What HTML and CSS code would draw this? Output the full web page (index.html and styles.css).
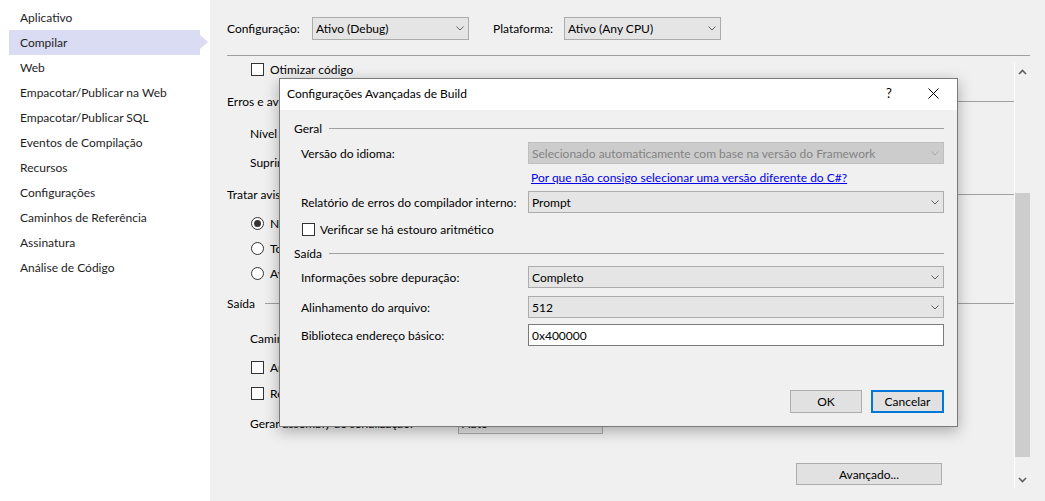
FILE: index.html
```html
<!DOCTYPE html>
<html lang="pt-BR">
<head>
<meta charset="utf-8">
<title>Compilar</title>
<link rel="stylesheet" href="styles.css">
</head>
<body>
<div class="app">
  <nav class="sidebar">
    <div class="nav-item">Aplicativo</div>
    <div class="nav-item is-active">Compilar</div>
    <div class="nav-item">Web</div>
    <div class="nav-item">Empacotar/Publicar na Web</div>
    <div class="nav-item">Empacotar/Publicar SQL</div>
    <div class="nav-item">Eventos de Compilação</div>
    <div class="nav-item">Recursos</div>
    <div class="nav-item">Configurações</div>
    <div class="nav-item">Caminhos de Referência</div>
    <div class="nav-item">Assinatura</div>
    <div class="nav-item">Análise de Código</div>
  </nav>
  <main class="page">
    <div class="config-bar">
      <span class="bar-label">Configuração:</span>
      <div class="combo combo-bar"><span class="combo-text">Ativo (Debug)</span><svg class="chev" width="8" height="5" viewBox="0 0 8 5"><path d="M0.5 0.5 L4 4 L7.5 0.5"/></svg></div>
      <span class="bar-label bar-label-platform">Plataforma:</span>
      <div class="combo combo-bar"><span class="combo-text">Ativo (Any CPU)</span><svg class="chev" width="8" height="5" viewBox="0 0 8 5"><path d="M0.5 0.5 L4 4 L7.5 0.5"/></svg></div>
    </div>
    <div class="bar-rule"></div>
    <div class="page-body">
      <div class="page-content">
        <div class="row opt gap-0"><span class="check"></span><span>Otimizar código</span></div>
        <div class="row heading"><span>Erros e avisos</span><span class="heading-line"></span></div>
        <div class="row field"><span class="field-label">Nível de aviso:</span><div class="combo combo-small"><span class="combo-text">4</span></div></div>
        <div class="row field gap-3"><span class="field-label">Suprimir avisos:</span><div class="textbox textbox-page"></div></div>
        <div class="row heading"><span>Tratar avisos como erros</span><span class="heading-line"></span></div>
        <div class="row opt radio-row gap-4"><span class="radio is-checked"></span><span>Nenhum</span></div>
        <div class="row opt radio-row gap-0"><span class="radio"></span><span>Todos</span></div>
        <div class="row opt radio-row gap-0"><span class="radio"></span><span>Avisos específicos:</span></div>
        <div class="row heading gap-4"><span>Saída</span><span class="heading-line"></span></div>
        <div class="row field gap-9"><span class="field-label">Caminho de saída:</span><div class="textbox textbox-page">bin\Debug\</div></div>
        <div class="row opt gap-3"><span class="check"></span><span>Arquivo de documentação XML:</span></div>
        <div class="row opt gap-0"><span class="check"></span><span>Registrar para interoperabilidade COM</span></div>
        <div class="row field gap-4"><span class="field-label">Gerar assembly de serialização:</span><div class="combo combo-small"><span class="combo-text">Auto</span></div></div>
        <div class="button-row"><button class="btn btn-advanced">Avançado...</button></div>
      </div>
      <div class="scrollbar">
        <div class="sb-arrow"><svg width="9" height="6" viewBox="0 0 9 6"><path d="M1 5 L4.5 1.5 L8 5"/></svg></div>
        <div class="sb-track"><div class="sb-thumb"></div></div>
        <div class="sb-arrow"><svg width="9" height="6" viewBox="0 0 9 6"><path d="M1 1 L4.5 4.5 L8 1"/></svg></div>
      </div>
    </div>
  </main>
</div>

<div class="dialog">
  <div class="dlg-title">
    <span class="dlg-title-text">Configurações Avançadas de Build</span>
    <span class="dlg-caption-btn dlg-help">?</span>
    <span class="dlg-caption-btn dlg-close"><svg width="11" height="11" viewBox="0 0 11 11"><path d="M0.5 0.5 L10.5 10.5 M10.5 0.5 L0.5 10.5"/></svg></span>
  </div>
  <div class="dlg-body">
    <div class="dlg-group"><span>Geral</span><span class="dlg-line"></span></div>
    <div class="dlg-field"><span class="dlg-label">Versão do idioma:</span><div class="combo combo-wide is-disabled"><span class="combo-text">Selecionado automaticamente com base na versão do Framework</span><svg class="chev" width="8" height="5" viewBox="0 0 8 5"><path d="M0.5 0.5 L4 4 L7.5 0.5"/></svg></div></div>
    <div class="dlg-link-row"><a class="dlg-link" href="#">Por que não consigo selecionar uma versão diferente do C#?</a></div>
    <div class="dlg-field dlg-report"><span class="dlg-label">Relatório de erros do compilador interno:</span><div class="combo combo-wide"><span class="combo-text">Prompt</span><svg class="chev" width="8" height="5" viewBox="0 0 8 5"><path d="M0.5 0.5 L4 4 L7.5 0.5"/></svg></div></div>
    <div class="dlg-check"><span class="check"></span><span>Verificar se há estouro aritmético</span></div>
    <div class="dlg-group dlg-group-out"><span>Saída</span><span class="dlg-line"></span></div>
    <div class="dlg-field dlg-debug"><span class="dlg-label">Informações sobre depuração:</span><div class="combo combo-wide"><span class="combo-text">Completo</span><svg class="chev" width="8" height="5" viewBox="0 0 8 5"><path d="M0.5 0.5 L4 4 L7.5 0.5"/></svg></div></div>
    <div class="dlg-field dlg-align"><span class="dlg-label">Alinhamento do arquivo:</span><div class="combo combo-wide"><span class="combo-text">512</span><svg class="chev" width="8" height="5" viewBox="0 0 8 5"><path d="M0.5 0.5 L4 4 L7.5 0.5"/></svg></div></div>
    <div class="dlg-field dlg-base"><span class="dlg-label">Biblioteca endereço básico:</span><div class="textbox textbox-wide">0x400000</div></div>
    <div class="dlg-buttons"><button class="btn btn-ok">OK</button><button class="btn btn-default">Cancelar</button></div>
  </div>
</div>
</body>
</html>
```

FILE: styles.css
```css
* { box-sizing: border-box; }
html, body { margin: 0; padding: 0; }
body {
  width: 1045px;
  height: 501px;
  overflow: hidden;
  position: relative;
  background: #f0f0f0;
  color: #000;
  font-family: Lato, "Liberation Sans", sans-serif;
  font-size: 12px;
}
.app { display: flex; height: 501px; }

/* sidebar */
.sidebar { flex: none; width: 210px; background: #fff; padding-top: 5px; }
.nav-item {
  position: relative;
  height: 25px;
  line-height: 25px;
  width: 191px;
  margin-left: 9px;
  padding-left: 11px;
  color: #1e1e1e;
  white-space: nowrap;
}
.nav-item.is-active { background: #d9dcf2; }
.nav-item.is-active::after {
  content: "";
  position: absolute;
  right: -8px;
  top: 5px;
  border-left: 8px solid #d9dcf2;
  border-top: 7px solid transparent;
  border-bottom: 7px solid transparent;
}

/* page */
.page { flex: 1; min-width: 0; display: flex; flex-direction: column; }
.config-bar { display: flex; align-items: center; height: 23px; margin-top: 17px; padding-left: 17px; white-space: nowrap; }
.bar-label { width: 85px; }
.bar-label-platform { width: 71px; margin-left: 24px; }
.bar-rule { height: 1px; background: #a0a0a0; margin: 15px 15px 0 17px; }

.combo {
  display: flex;
  align-items: center;
  height: 22px;
  background: #e5e5e5;
  border: 1px solid #acacac;
  padding: 0 4px 0 3px;
  white-space: nowrap;
}
.combo-text { flex: 1; overflow: hidden; }
.chev { flex: none; }
.chev path { fill: none; stroke: #606060; stroke-width: 1; }
.combo-bar { width: 157px; height: 23px; }
.combo-small { width: 145px; }
.combo.is-disabled { background: #cccccc; border-color: #bfbfbf; color: #838383; }
.combo.is-disabled .chev path { stroke: #a8a8a8; }

.textbox { height: 22px; background: #fff; border: 1px solid #7a7a7a; padding: 0 3px; display: flex; align-items: center; white-space: nowrap; }
.textbox-page { width: 300px; }

.page-body { flex: 1; min-height: 0; display: flex; }
.page-content { flex: 1; min-width: 0; padding-left: 17px; }

.row { display: flex; align-items: center; height: 26px; margin-top: 6px; white-space: nowrap; }
.row.gap-0 { margin-top: 0; }
.row.gap-3 { margin-top: 3px; }
.row.gap-4 { margin-top: 4px; }
.row.gap-9 { margin-top: 9px; }
.row.radio-row { height: 25px; }
.heading-line { flex: 1; height: 1px; background: #a0a0a0; margin-left: 10px; }
.opt { padding-left: 24px; }
.field { padding-left: 23px; }
.field-label { width: 208px; flex: none; }

.check { flex: none; width: 13px; height: 13px; border: 1px solid #333; background: #fff; margin-right: 6px; }
.radio { flex: none; width: 13px; height: 13px; border: 1px solid #333; border-radius: 50%; background: #fff; margin-right: 6px; display: flex; align-items: center; justify-content: center; }
.radio.is-checked::before { content: ""; width: 7px; height: 7px; border-radius: 50%; background: #333; }

.button-row { display: flex; justify-content: flex-end; padding-right: 72px; margin-top: 27px; }
.btn {
  font: inherit;
  color: #000;
  height: 23px;
  background: #e1e1e1;
  border: 1px solid #adadad;
  padding: 0;
  border-radius: 0;
}
.btn-advanced { width: 146px; height: 22px; }

.scrollbar { flex: none; width: 16px; margin: 7px 15px 13px 0; border-left: 1px solid #fff; display: flex; flex-direction: column; }
.sb-arrow { height: 17px; display: flex; align-items: center; justify-content: center; }
.sb-arrow path { fill: none; stroke: #606060; stroke-width: 1.6; }
.sb-track { flex: 1; }
.sb-thumb { margin-top: 113px; height: 264px; background: #cdcdcd; }

/* dialog */
.dialog {
  position: absolute;
  left: 279px;
  top: 78px;
  width: 679px;
  height: 349px;
  background: #f0f0f0;
  border: 1px solid #7a7a7a;
  box-shadow: 0 4px 14px rgba(0, 0, 0, 0.3);
  display: flex;
  flex-direction: column;
}
.dlg-title { flex: none; height: 31px; background: #fff; display: flex; align-items: center; padding: 0 1px 3px 7px; white-space: nowrap; }
.dlg-title-text { flex: 1; }
.dlg-caption-btn { display: flex; justify-content: center; align-items: center; font-size: 13px; }
.dlg-help { width: 42px; }
.dlg-close { width: 46px; }
.dlg-caption-btn path { fill: none; stroke: #000; stroke-width: 1; }

.dlg-body { flex: 1; padding: 0 13px 0 14px; display: flex; flex-direction: column; }
.dlg-group { display: flex; align-items: center; height: 16px; margin-top: 10px; }
.dlg-group-out { margin-top: 7px; }
.dlg-line { flex: 1; height: 1px; background: #a0a0a0; margin-left: 7px; }
.dlg-field { display: flex; align-items: center; height: 22px; margin-top: 6px; }
.dlg-report { margin-top: 5px; }
.dlg-debug { margin-top: 5px; }
.dlg-align { margin-top: 8px; }
.dlg-label { flex: none; width: 234px; padding-left: 7px; white-space: nowrap; }
.combo-wide, .textbox-wide { flex: 1; }
.dlg-link-row { height: 18px; margin-top: 4px; padding-left: 237px; display: flex; align-items: center; }
.dlg-link { color: #0000ee; text-decoration: underline; white-space: nowrap; }
.dlg-check { display: flex; align-items: center; height: 18px; margin-top: 7px; padding-left: 8px; }
.dlg-check .check { margin-right: 5px; }
.dlg-buttons { display: flex; justify-content: flex-end; gap: 9px; margin-top: 44px; }
.btn-ok { width: 72px; }
.btn-default { width: 73px; border: 2px solid #0078d7; }
```
